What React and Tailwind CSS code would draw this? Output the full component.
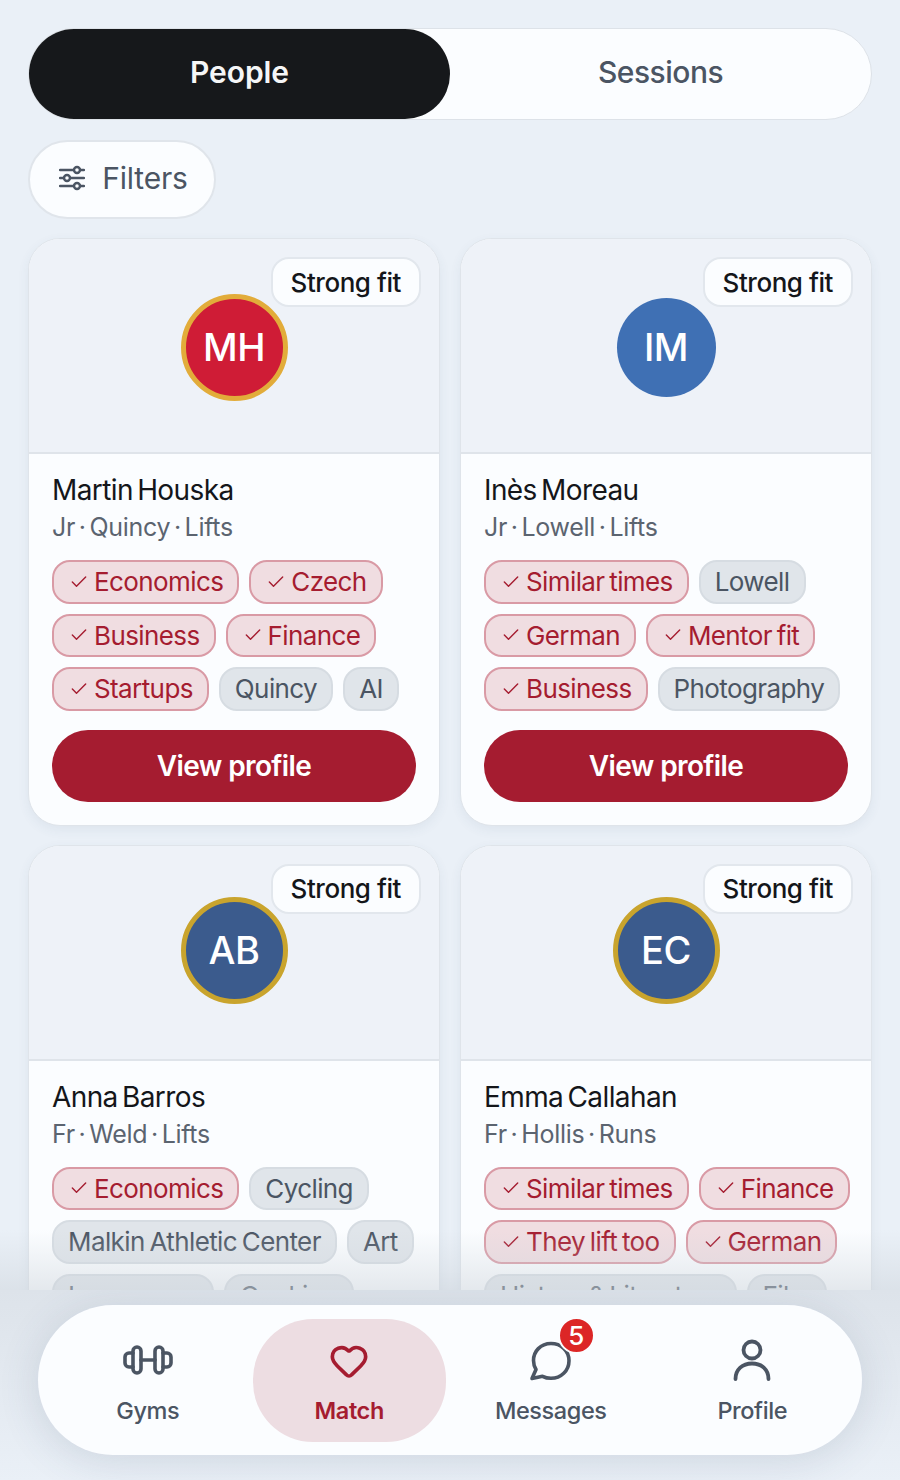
import { Check, Heart } from "lucide-react";

const people = [
  {
    name: "Martin Houska",
    sub: "Jr · Quincy · Lifts",
    initials: "MH",
    avatar: "mt-[4px] bg-[#cf1c36] border-[#e2ac3a] border-[5px] w-[107px] h-[107px]",
    chips: [["Economics", 1], ["Czech", 1], ["Business", 1], ["Finance", 1], ["Startups", 1], ["Quincy", 0], ["AI", 0]],
  },
  {
    name: "Inès Moreau",
    sub: "Jr · Lowell · Lifts",
    initials: "IM",
    avatar: "mt-[4px] bg-[#3f70b4] w-[99px] h-[99px]",
    chips: [["Similar times", 1], ["Lowell", 0], ["German", 1], ["Mentor fit", 1], ["Business", 1], ["Photography", 0]],
  },
  {
    name: "Anna Barros",
    sub: "Fr · Weld · Lifts",
    initials: "AB",
    avatar: "mb-[4px] bg-[#3b5b8d] border-[#c9a42d] border-[5px] w-[107px] h-[107px]",
    chips: [["Economics", 1], ["Cycling", 0], ["Malkin Athletic Center", 0], ["Art", 0], ["Languages", 0], ["Cooking", 0]],
  },
  {
    name: "Emma Callahan",
    sub: "Fr · Hollis · Runs",
    initials: "EC",
    avatar: "mb-[4px] bg-[#3b5b8d] border-[#c9a42d] border-[5px] w-[107px] h-[107px]",
    chips: [["Similar times", 1], ["Finance", 1], ["They lift too", 1], ["German", 1], ["History & Literature", 0], ["Film", 0]],
  },
];

function Chip({ label, on }) {
  if (on) {
    return (
      <span className="flex items-center gap-[5px] h-[43.5px] pl-[15px] pr-[14px] rounded-[18px] border-2 border-[#d99aa5] bg-[#f0dde1] text-[#a51c30] text-[26px] tracking-[-0.6px] [word-spacing:-2px]">
        <Check size={20} strokeWidth={1.7} />
        {label}
      </span>
    );
  }
  return (
    <span className="flex items-center h-[43.5px] px-[14px] rounded-[18px] border-2 border-[#d6dce2] bg-[#e0e5ea] text-[#4b5563] text-[26px] tracking-[-0.6px] [word-spacing:-2px]">
      {label}
    </span>
  );
}

function PersonCard({ person }) {
  return (
    <div className="rounded-[32px] overflow-hidden bg-[#fbfdff] border border-[#dfe4ea] shadow-[0_4px_12px_rgba(60,80,110,0.07)]">
      <div className="relative h-[215px] flex items-center justify-center bg-[#eef2f8] border-b-2 border-[#dfe4ea]">
        <div className={`flex items-center justify-center rounded-full text-white text-[38px] font-medium tracking-[-0.5px] ${person.avatar}`}>
          {person.initials}
        </div>
        <span className="absolute top-[18px] right-[18px] h-[50px] px-[18px] flex items-center rounded-[18px] bg-[#fbfdff] border-2 border-[#e2e7ed] text-[#14161a] text-[26px] font-medium tracking-[-0.45px]">
          Strong fit
        </span>
      </div>
      <div className="px-[23px] pt-[18px] pb-[23px]">
        <div className="text-[#14161a] text-[28px] leading-[36px] tracking-[-0.6px] [word-spacing:-3px]">{person.name}</div>
        <div className="mt-[1px] text-[#5b6470] text-[25px] leading-[36px] tracking-[-0.3px] [word-spacing:-3px]">{person.sub}</div>
        <div className="mt-[15px] -mr-[3px] flex flex-wrap gap-x-[10px] gap-y-[10px]">
          {person.chips.map(([label, on]) => (
            <Chip key={label} label={label} on={!!on} />
          ))}
        </div>
        <button className="mt-[19px] w-full h-[72px] rounded-full bg-[#a51c30] text-white text-[28px] font-semibold tracking-[-0.6px]">
          View profile
        </button>
      </div>
    </div>
  );
}

function FilterIcon() {
  return (
    <svg width="26" height="26" viewBox="0 0 26 26" fill="none" stroke="#4b5563" strokeWidth="2.4" strokeLinecap="round">
      <path d="M1 5h14M21 5h4M1 13h4M11 13h14M1 21h14M21 21h4" />
      <circle cx="18" cy="5" r="3" />
      <circle cx="8" cy="13" r="3" />
      <circle cx="18" cy="21" r="3" />
    </svg>
  );
}

function DumbbellIcon() {
  return (
    <svg width="50" height="30" viewBox="0 0 50 30" fill="none" stroke="#4b5563" strokeWidth="3.6" strokeLinecap="round" strokeLinejoin="round">
      <rect x="10" y="2" width="8" height="26" rx="4" />
      <rect x="32" y="2" width="8" height="26" rx="4" />
      <path d="M18 15h14" />
      <path d="M10 8H6a4 4 0 0 0-4 4v6a4 4 0 0 0 4 4h4" />
      <path d="M40 8h4a4 4 0 0 1 4 4v6a4 4 0 0 1-4 4h-4" />
    </svg>
  );
}

function MessageIcon() {
  return (
    <svg width="44" height="40" viewBox="0 0 44 40" fill="none" stroke="#4b5563" strokeWidth="3.6" strokeLinecap="round" strokeLinejoin="round">
      <path d="M22 2.500C11.500 2.500 4.500 10.500 4.500 19.500c0 3.500 1 6.500 2.500 9L3 37.500l10.500-2.200c2.500 1.300 5.500 2 8.500 2 10 0 18-7.500 18-17.500S32 2.500 22 2.500Z" />
    </svg>
  );
}

function UserIcon() {
  return (
    <svg width="38" height="42" viewBox="0 0 38 42" fill="none" stroke="#4b5563" strokeWidth="3.8" strokeLinecap="round">
      <circle cx="19" cy="11" r="8.500" />
      <path d="M2.500 40c0-9.500 7-15.500 16.500-15.500S35.500 30.500 35.500 40" />
    </svg>
  );
}

function NavItem({ icon, label, active }) {
  return (
    <div className={`flex-1 h-[123px] pt-[20px] flex flex-col items-center gap-[15px] rounded-[60px] ${active ? "bg-[#eddde2] text-[#a51c30]" : "text-[#4b5563]"}`}>
      <div className="h-[42px] flex items-center justify-center">{icon}</div>
      <span className={`text-[23.5px] leading-[30px] tracking-[-0.4px] ${active ? "font-semibold" : "font-medium"}`}>{label}</span>
    </div>
  );
}

export default function App() {
  return (
    <div className="h-[1480px] flex flex-col overflow-hidden bg-[#eaf0f7] font-['Inter','Liberation_Sans',sans-serif]">
      <main className="relative h-[1290px] shrink-0 overflow-hidden px-[28px] pt-[28px]">
        <div className="flex h-[92px] rounded-full bg-[#fbfdff] border border-[#dde2e8]">
          <button className="w-[421px] pb-[4px] rounded-full bg-[#16181b] text-[#f5f6f7] text-[30px] font-semibold tracking-[-0.1px]">People</button>
          <button className="flex-1 pb-[4px] text-[#4b5563] text-[30px] font-medium tracking-[-0.5px]">Sessions</button>
        </div>
        <button className="mt-[20px] w-[188px] h-[79px] pl-[3px] pb-[3px] flex items-center justify-center gap-[17px] rounded-full bg-[#fbfdff] border-2 border-[#e0e5eb] text-[#4b5563] text-[30px] tracking-[-0.2px]">
          <FilterIcon />
          Filters
        </button>
        <div className="mt-[19px] grid grid-cols-2 gap-x-[20px] gap-y-[19px]">
          {people.map((p) => (
            <PersonCard key={p.name} person={p} />
          ))}
        </div>
        <div className="absolute left-0 right-0 bottom-0 h-[60px] bg-gradient-to-b from-transparent to-[#cdd4db]/50" />
      </main>
      <footer className="flex-1 px-[38px] pt-[15px] bg-gradient-to-b from-[#dde3ea] to-[#eaf0f7]">
        <nav className="h-[150px] flex items-center px-[13px] gap-[8px] rounded-[75px] bg-[#fbfdff] shadow-[0_6px_40px_rgba(70,90,120,0.16)]">
          <NavItem icon={<DumbbellIcon />} label="Gyms" />
          <NavItem icon={<Heart className="mt-[3px]" size={40} strokeWidth={2.2} />} label="Match" active />
          <NavItem
            label="Messages"
            icon={
              <div className="relative mt-[2px]">
                <MessageIcon />
                <span className="absolute -top-[24px] -right-[22px] w-[37px] h-[37px] rounded-full bg-[#dc2626] border-2 border-[#fbfdff] text-white text-[26px] font-medium flex items-center justify-center">5</span>
              </div>
            }
          />
          <NavItem icon={<UserIcon />} label="Profile" />
        </nav>
      </footer>
    </div>
  );
}
